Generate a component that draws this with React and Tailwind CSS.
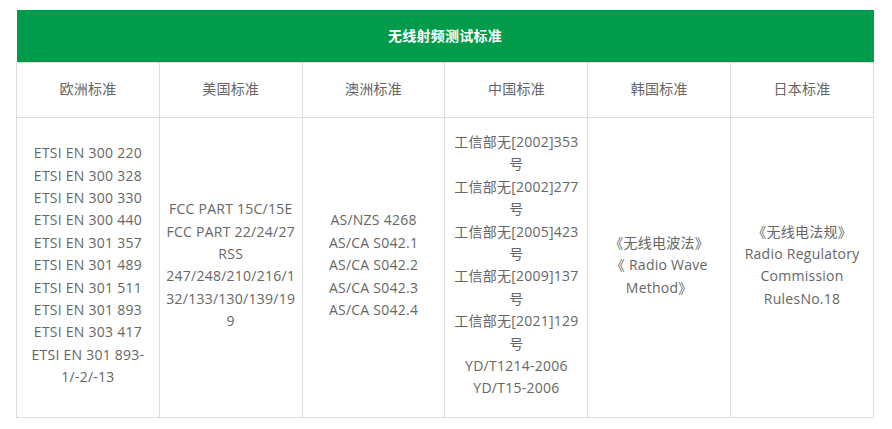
import React from 'react';

const HEADS = ['欧洲标准', '美国标准', '澳洲标准', '中国标准', '韩国标准', '日本标准'];

// each cell holds its lines exactly as they wrap in the narrow column
const CELLS = [
  [
    'ETSI EN 300 220',
    'ETSI EN 300 328',
    'ETSI EN 300 330',
    'ETSI EN 300 440',
    'ETSI EN 301 357',
    'ETSI EN 301 489',
    'ETSI EN 301 511',
    'ETSI EN 301 893',
    'ETSI EN 303 417',
    'ETSI EN 301 893-',
    '1/-2/-13',
  ],
  ['FCC PART 15C/15E', 'FCC PART 22/24/27', 'RSS', '247/248/210/216/1', '32/133/130/139/19', '9'],
  ['AS/NZS 4268', 'AS/CA S042.1', 'AS/CA S042.2', 'AS/CA S042.3', 'AS/CA S042.4'],
  [
    '工信部无[2002]353',
    '号',
    '工信部无[2002]277',
    '号',
    '工信部无[2005]423',
    '号',
    '工信部无[2009]137',
    '号',
    '工信部无[2021]129',
    '号',
    'YD/T1214-2006',
    'YD/T15-2006',
  ],
  ['《无线电波法》', '《 Radio Wave', 'Method》'],
  ['《无线电法规》', 'Radio Regulatory', 'Commission', 'RulesNo.18'],
];

export default function App() {
  return (
    <div
      className="bg-white pt-[10px] pl-[16px] min-h-[429px]"
      style={{ fontFamily: '"Open Sans", "Noto Sans CJK SC", sans-serif' }}
    >
      <table className="w-[858px] table-fixed border-collapse text-[14px] leading-[22.4px] tracking-[0.25px] text-[#666]">
        <thead>
          <tr>
            <th colSpan={6} className="h-[52px] p-0 bg-[#009b4b] text-center font-bold text-white">
              无线射频测试标准
            </th>
          </tr>
          <tr>
            {HEADS.map((h) => (
              <th key={h} className="border border-[#ddd] pt-[15px] pb-[17px] px-1 text-center font-normal">
                {h}
              </th>
            ))}
          </tr>
        </thead>
        <tbody>
          <tr>
            {CELLS.map((lines, i) => (
              <td key={i} className="border border-[#ddd] px-1 pt-[13px] pb-[17px] text-center align-middle">
                {lines.map((l, j) => (
                  <div key={j} className="whitespace-nowrap">
                    {l}
                  </div>
                ))}
              </td>
            ))}
          </tr>
        </tbody>
      </table>
    </div>
  );
}
